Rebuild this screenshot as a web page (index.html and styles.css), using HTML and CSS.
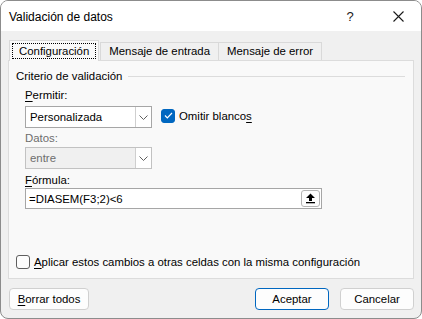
FILE: index.html
```html
<!DOCTYPE html>
<html>
<head>
    <title>Validación de datos</title>
    <link rel="stylesheet" href="styles.css">
</head>
<body>
    <div class="window">
        <div class="titlebar">
            <span class="title">Validación de datos</span>
            <span class="help">?</span>
            <span class="close">
                <svg width="11" height="11" viewBox="0 0 11 11"><path d="M0.5 0.5L10.5 10.5M10.5 0.5L0.5 10.5" stroke="#1a1a1a" stroke-width="1.1" fill="none"/></svg>
            </span>
        </div>
        <div class="content">
            <div class="tabs">
                <div class="tab active"><span class="focus">Configuración</span></div>
                <div class="tab">Mensaje de entrada</div>
                <div class="tab">Mensaje de error</div>
            </div>
            <div class="panel">
                <div class="group-title">
                    <span>Criterio de validación</span>
                    <div class="rule"></div>
                </div>
                <div class="fields">
                    <div class="label"><u>P</u>ermitir:</div>
                    <div class="row">
                        <div class="select">
                            <span class="value">Personalizada</span>
                            <span class="arrow">
                                <svg width="9" height="5" viewBox="0 0 9 5"><path d="M0.5 0.5L4.5 4.5L8.5 0.5" stroke="#606060" fill="none"/></svg>
                            </span>
                        </div>
                        <div class="check">
                            <span class="box checked">
                                <svg width="9" height="7" viewBox="0 0 9 7"><path d="M1 3.5L3.3 5.8L8 1" stroke="#fff" stroke-width="1.2" fill="none"/></svg>
                            </span>
                            <span>Omitir blanco<u>s</u></span>
                        </div>
                    </div>
                    <div class="label disabled">Datos:</div>
                    <div class="select disabled">
                        <span class="value">entre</span>
                        <span class="arrow">
                            <svg width="9" height="5" viewBox="0 0 9 5"><path d="M0.5 0.5L4.5 4.5L8.5 0.5" stroke="#606060" fill="none"/></svg>
                        </span>
                    </div>
                    <div class="label formula-label"><u>F</u>órmula:</div>
                    <div class="formula">
                        <span class="value">=DIASEM(F3;2)&lt;6</span>
                        <span class="collapse">
                            <svg width="11" height="11" viewBox="0 0 11 11"><path d="M5.5 0.5L10 5H7V8H4V5H1Z" fill="#000"/><rect x="1" y="9" width="9" height="1.3" fill="#000"/></svg>
                        </span>
                    </div>
                </div>
                <div class="spacer"></div>
                <div class="check apply">
                    <span class="box"></span>
                    <span><u>A</u>plicar estos cambios a otras celdas con la misma configuración</span>
                </div>
            </div>
            <div class="footer">
                <button class="btn"><u>B</u>orrar todos</button>
                <div class="grow"></div>
                <button class="btn primary">Aceptar</button>
                <button class="btn">Cancelar</button>
            </div>
        </div>
    </div>
</body>
</html>
```

FILE: styles.css
```css
html, body { margin: 0; padding: 0; background: #ffffff; }
body { font-family: "Liberation Sans", Arial, sans-serif; font-size: 11.4px; color: #000; }
u { text-decoration: underline; text-underline-offset: 2px; }

.window {
    width: 422px;
    height: 319px;
    box-sizing: border-box;
    border: 1px solid #8c8c8c;
    border-radius: 8px;
    overflow: hidden;
    background: #f0f0f0;
    display: flex;
    flex-direction: column;
}

.titlebar {
    height: 30px;
    background: #ffffff;
    display: flex;
    align-items: center;
    flex-shrink: 0;
}
.title { padding-left: 8px; flex: 1; font-size: 12px; margin-top: 1px; }
.help { width: 46px; text-align: center; font-size: 13px; color: #1a1a1a; }
.close { width: 46px; display: flex; justify-content: center; padding-left: 2px; }

.content {
    flex: 1;
    display: flex;
    flex-direction: column;
    padding: 8px 7px 0 7px;
}

.tabs { display: flex; align-items: flex-end; height: 21px; padding-left: 1px; }
.tab {
    height: 18px;
    line-height: 17px;
    padding: 0 8px;
    border: 1px solid #d9d9d9;
    border-bottom: none;
    box-sizing: border-box;
    background: #f0f0f0;
    margin-left: -1px;
}
.tab.active {
    height: 21px;
    background: #f9f9f9;
    padding: 2px 2px 0 2px;
    margin-bottom: -1px;
    position: relative;
    z-index: 1;
    margin-left: 0;
    margin-right: 1px;
}
.tab.active + .tab { margin-left: 0; }
.focus {
    display: block;
    border: 1px dotted #000;
    line-height: 14px;
    padding: 0 6px;
}

.panel {
    height: 219px;
    box-sizing: border-box;
    background: #f9f9f9;
    border: 1px solid #dcdcdc;
    padding: 7px 8px 8px 7px;
    display: flex;
    flex-direction: column;
}

.group-title { display: flex; align-items: center; height: 16px; }
.group-title .rule { flex: 1; border-top: 1px solid #dcdcdc; margin-left: 6px; margin-top: 1px; }

.fields { margin-left: 9px; }
.label { height: 16px; line-height: 16px; margin-top: 3px; }
.label.disabled { color: #6d6d6d; margin-top: 2px; }
.label.formula-label { margin-top: 3px; }

.row { display: flex; align-items: center; margin-top: 3px; }

.select {
    width: 127px;
    height: 22px;
    box-sizing: border-box;
    border: 1px solid #a6a6a6;
    background: #fff;
    display: flex;
}
.select .value { flex: 1; padding-left: 4px; line-height: 20px; }
.select .arrow {
    width: 15px;
    border-left: 1px solid #cfcfcf;
    background: #fff;
    display: flex;
    align-items: center;
    justify-content: center;
}
.select.disabled { margin-top: 1px; background: #f0f0f0; border-color: #c2c2c2; }
.select.disabled .value { color: #6d6d6d; }

.check { display: flex; align-items: center; }
.row .check { margin-left: 9px; margin-top: -3px; }
.box {
    width: 14px;
    height: 14px;
    box-sizing: border-box;
    border: 1px solid #5f5f5f;
    border-radius: 3px;
    background: #fdfdfd;
    margin-right: 4px;
    display: flex;
    align-items: center;
    justify-content: center;
}
.box.checked { background: #0067c0; border-color: #0067c0; }

.formula {
    width: 297px;
    height: 21px;
    box-sizing: border-box;
    border: 1px solid #a6a6a6;
    background: #fff;
    display: flex;
    align-items: center;
}
.formula .value { flex: 1; padding-left: 3px; }
.collapse {
    width: 19px;
    height: 17px;
    box-sizing: border-box;
    border: 1px solid #b4b4b4;
    border-radius: 3px;
    background: #fdfdfd;
    margin-right: 1px;
    display: flex;
    align-items: center;
    justify-content: center;
}

.spacer { flex: 1; }
.apply { height: 16px; }

.footer { display: flex; padding-top: 9px; gap: 11px; }
.grow { flex: 1; }
.btn {
    font-family: "Liberation Sans", Arial, sans-serif;
    font-size: 11.4px;
    color: #000;
    height: 22px;
    width: 74px;
    box-sizing: border-box;
    background: #fdfdfd;
    border: 1px solid #d0d0d0;
    border-radius: 4px;
    padding: 0;
}
.btn:first-child { width: 80px; margin-left: 1px; }
.btn.primary { border-color: #0067c0; }
```
